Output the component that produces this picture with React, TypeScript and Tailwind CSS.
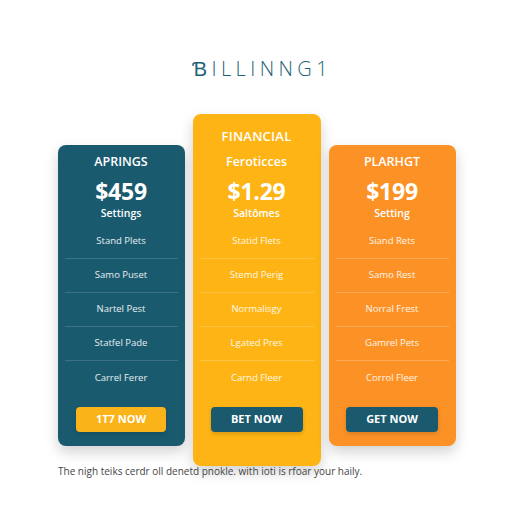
const PLANS = [
  {
    tag: null as string | null,
    name: 'APRINGS',
    price: '$459',
    sub: 'Settings',
    rows: ['Stand Plets', 'Samo Puset', 'Nartel Pest', 'Statfel Pade', 'Carrel Ferer'],
    cta: '1T7 NOW',
    card: 'bg-[#1a5a6f] w-[127px] mt-[31px] pb-[14px]',
    line: 'border-white/15',
    btn: 'bg-[#fbb31a] w-[90px]',
  },
  {
    tag: 'FINANCIAL',
    name: 'Feroticces',
    price: '$1.29',
    sub: 'Saltômes',
    rows: ['Statid Flets', 'Stemd Perig', 'Normalisgy', 'Lgated Pres', 'Carnd Fleer'],
    cta: 'BET NOW',
    card: 'bg-[#fdb414] w-[128px] pb-[34px]',
    line: 'border-white/20',
    btn: 'bg-[#1b5a6e] w-[92px]',
  },
  {
    tag: null,
    name: 'PLARHGT',
    price: '$199',
    sub: 'Setting',
    rows: ['Siand Rets', 'Samo Rest', 'Norral Frest', 'Gamrel Pets', 'Corrol Fleer'],
    cta: 'GET NOW',
    card: 'bg-[#fc9226] w-[127px] mt-[31px] pb-[14px]',
    line: 'border-white/20',
    btn: 'bg-[#1b5a6e] w-[92px]',
  },
]

export default function App() {
  return (
    <div className="w-[512px] h-[512px] bg-white flex flex-col items-center font-['Open_Sans',sans-serif]">
      <h1 className="mt-[56px] h-[26px] leading-[26px] text-[20px] font-light tracking-[0.22em] text-[#1f6276] pl-[12px]">
        ƁILLINNG1
      </h1>

      <div className="mt-[32px] flex items-start gap-[8px] pl-[1px]">
        {PLANS.map(p => (
          <div
            key={p.name}
            className={`${p.card} rounded-[8px] shadow-[0_6px_14px_rgba(0,0,0,0.18)] flex flex-col items-center text-white px-[7px] pt-[9px]`}
          >
            {p.tag && (
              <div className="h-[22px] mt-[2px] mb-[7px] text-[13px] leading-[22px] font-semibold tracking-[0.02em]">{p.tag}</div>
            )}
            <div className="h-4 leading-4 text-[12.5px] font-semibold">{p.name}</div>
            <div className="mt-[8px] h-[26px] leading-[26px] text-[23px] font-bold tracking-[-0.01em]">{p.price}</div>
            <div className="mt-[3px] h-[13px] leading-[13px] text-[10.5px] font-semibold">{p.sub}</div>
            <div className="mt-[5px] w-full flex flex-col">
              {p.rows.map((r, i) => (
                <div
                  key={r}
                  className={`h-[34px] flex items-center justify-center text-[9.5px] text-white/90 ${i < 4 ? `border-b ${p.line}` : ''}`}
                >
                  {r}
                </div>
              ))}
            </div>
            <button
              type="button"
              className={`${p.btn} mt-[12px] h-[25px] rounded-[4px] text-[11px] font-bold text-white shadow-[0_2px_4px_rgba(0,0,0,0.15)]`}
            >
              {p.cta}
            </button>
          </div>
        ))}
      </div>

      <p className="self-start ml-[58px] text-[10px] text-[#444] leading-[14px] relative top-[-2px]">
        The nigh teiks cerdr oll denetd pnokle. with ioti is rfoar your haily.
      </p>
    </div>
  )
}
